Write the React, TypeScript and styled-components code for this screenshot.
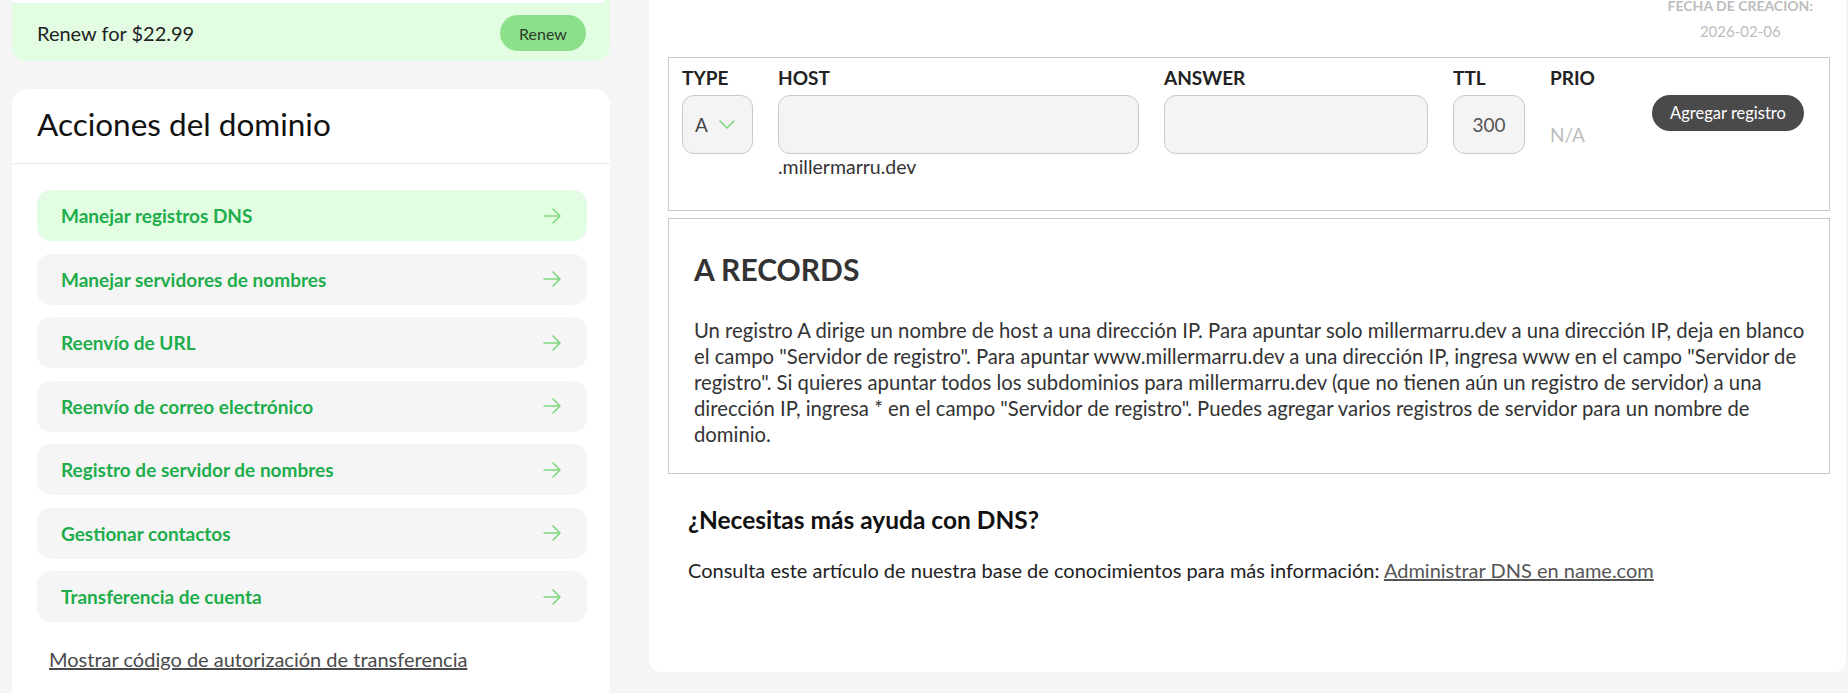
import styled, { createGlobalStyle } from "styled-components";

const GlobalStyle = createGlobalStyle`
  html, body {
    margin: 0;
    padding: 0;
    background: #f5f5f5;
    overflow: hidden;
  }
  body {
    font-family: Lato, "Liberation Sans", sans-serif;
    color: #222;
  }
`;

const actions = [
  "Manejar registros DNS",
  "Manejar servidores de nombres",
  "Reenvío de URL",
  "Reenvío de correo electrónico",
  "Registro de servidor de nombres",
  "Gestionar contactos",
  "Transferencia de cuenta",
];

const Arrow = () => (
  <svg width="18" height="16" viewBox="0 0 18 16" fill="none">
    <path
      d="M1 8H17M10 1L17 8L10 15"
      stroke="#7fd97f"
      strokeWidth="1.6"
      strokeLinecap="round"
      strokeLinejoin="round"
    />
  </svg>
);

const Chevron = () => (
  <svg width="16" height="9" viewBox="0 0 16 9" fill="none">
    <path
      d="M1 1L8 8L15 1"
      stroke="#7fd97f"
      strokeWidth="1.6"
      strokeLinecap="round"
      strokeLinejoin="round"
    />
  </svg>
);

const App = () => {
  return (
    <>
      <GlobalStyle />
      <Page>
        <LeftColumn>
          <RenewCard>
            <RenewTop />
            <RenewRow>
              <RenewText>Renew for $22.99</RenewText>
              <RenewButton>Renew</RenewButton>
            </RenewRow>
          </RenewCard>

          <ActionsCard>
            <ActionsHeader>Acciones del dominio</ActionsHeader>
            <ActionsList>
              {actions.map((label, i) => (
                <ActionItem key={label} $active={i === 0}>
                  <span>{label}</span>
                  <Arrow />
                </ActionItem>
              ))}
            </ActionsList>
            <AuthLink href="#">
              Mostrar código de autorización de transferencia
            </AuthLink>
          </ActionsCard>
        </LeftColumn>

        <RightPanel>
          <Meta>
            <MetaLabel>FECHA DE CREACION:</MetaLabel>
            <MetaValue>2026-02-06</MetaValue>
          </Meta>

          <FormBox>
            <Field $width={71}>
              <Label>TYPE</Label>
              <Select>
                <span>A</span>
                <Chevron />
              </Select>
            </Field>
            <Field $width={361}>
              <Label>HOST</Label>
              <Input />
              <Suffix>.millermarru.dev</Suffix>
            </Field>
            <Field $width={264}>
              <Label>ANSWER</Label>
              <Input />
            </Field>
            <Field $width={72}>
              <Label>TTL</Label>
              <Input defaultValue="300" $center />
            </Field>
            <Field $width={77}>
              <Label>PRIO</Label>
              <Muted>N/A</Muted>
            </Field>
            <AddButton>Agregar registro</AddButton>
          </FormBox>

          <InfoBox>
            <InfoTitle>A RECORDS</InfoTitle>
            <InfoText>
              Un registro A dirige un nombre de host a una dirección IP. Para
              apuntar solo millermarru.dev a una dirección IP, deja en blanco el
              campo "Servidor de registro". Para apuntar www.millermarru.dev a
              una dirección IP, ingresa www en el campo "Servidor de registro".
              Si quieres apuntar todos los subdominios para millermarru.dev (que
              no tienen aún un registro de servidor) a una dirección IP, ingresa
              * en el campo "Servidor de registro". Puedes agregar varios
              registros de servidor para un nombre de dominio.
            </InfoText>
          </InfoBox>

          <Help>
            <HelpTitle>¿Necesitas más ayuda con DNS?</HelpTitle>
            <HelpText>
              Consulta este artículo de nuestra base de conocimientos para más
              información: <HelpLink href="#">Administrar DNS en name.com</HelpLink>
            </HelpText>
          </Help>
        </RightPanel>
      </Page>
    </>
  );
};

export default App;

const Page = styled.div`
  display: flex;
  align-items: flex-start;
  gap: 39px;
  height: 693px;
  padding: 0 2px 0 12px;
  box-sizing: border-box;
  overflow: hidden;
`;

const LeftColumn = styled.div`
  width: 598px;
  flex-shrink: 0;
  display: flex;
  flex-direction: column;
  gap: 28px;
`;

const RenewCard = styled.div`
  background: #e3fde3;
  border-radius: 0 0 14px 14px;
`;

const RenewTop = styled.div`
  height: 3px;
  margin: 0 6px 0 0;
  background: #fff;
  border-radius: 0 0 10px 10px;
`;

const RenewRow = styled.div`
  display: flex;
  align-items: center;
  justify-content: space-between;
  padding: 12px 24px 10px 25px;
`;

const RenewText = styled.span`
  font-size: 20px;
  color: #222;
`;

const RenewButton = styled.button`
  height: 36px;
  width: 86px;
  border: none;
  border-radius: 18px;
  background: #8de08a;
  color: #2b3a2b;
  font-family: inherit;
  font-size: 16px;
  cursor: pointer;
`;

const ActionsCard = styled.div`
  background: #fff;
  border-radius: 16px 16px 0 0;
  height: 640px;
`;

const ActionsHeader = styled.h2`
  margin: 0;
  height: 75px;
  box-sizing: border-box;
  display: flex;
  align-items: center;
  padding: 0 25px 4px;
  border-bottom: 1px solid #ebebeb;
  font-size: 31.5px;
  font-weight: 400;
  color: #111;
`;

const ActionsList = styled.div`
  display: flex;
  flex-direction: column;
  gap: 12.5px;
  padding: 26px 23px 0 25px;
`;

const ActionItem = styled.div<{ $active: boolean }>`
  height: 51px;
  display: flex;
  align-items: center;
  justify-content: space-between;
  padding: 0 26px 0 24px;
  border-radius: 14px;
  background: ${(props) => (props.$active ? "#e2fde2" : "#f5f5f5")};
  color: #20ad4b;
  font-size: 19px;
  font-weight: 700;
  cursor: pointer;
`;

const AuthLink = styled.a`
  display: inline-block;
  margin: 25px 0 0 37px;
  font-size: 20px;
  line-height: 24px;
  color: #4a4a4a;
  text-decoration: underline;
`;

const RightPanel = styled.div`
  flex: 1;
  height: 672px;
  box-sizing: border-box;
  background: #fff;
  border-radius: 0 0 12px 12px;
  padding: 0 16px 0 19px;
  display: flex;
  flex-direction: column;
`;

const Meta = styled.div`
  align-self: flex-end;
  margin: -4px 17px 16px 0;
  display: flex;
  flex-direction: column;
  align-items: center;
`;

const MetaLabel = styled.div`
  font-size: 14px;
  line-height: 20px;
  font-weight: 700;
  color: #bdbdbd;
`;

const MetaValue = styled.div`
  margin-top: 5px;
  font-size: 15px;
  line-height: 20px;
  color: #bdbdbd;
`;

const FormBox = styled.div`
  height: 154px;
  box-sizing: border-box;
  border: 1px solid #c9c9c9;
  padding: 10px 0 0 13px;
  display: flex;
  align-items: flex-start;
  gap: 25px;
`;

const Field = styled.div<{ $width: number }>`
  width: ${(props) => props.$width}px;
  flex-shrink: 0;
  display: flex;
  flex-direction: column;
`;

const Label = styled.div`
  font-size: 19px;
  line-height: 20px;
  font-weight: 700;
  color: #222;
  margin-bottom: 7px;
`;

const Select = styled.div`
  height: 59px;
  box-sizing: border-box;
  border: 1px solid #c9c9c9;
  border-radius: 12px;
  background: #f4f4f4;
  display: flex;
  align-items: center;
  gap: 11px;
  padding-left: 12px;
  font-size: 19px;
  color: #444;
`;

const Input = styled.input<{ $center?: boolean }>`
  height: 59px;
  width: 100%;
  box-sizing: border-box;
  border: 1px solid #c9c9c9;
  border-radius: 12px;
  background: #f4f4f4;
  font-family: inherit;
  font-size: 19px;
  color: #555;
  text-align: ${(props) => (props.$center ? "center" : "left")};
  outline: none;
`;

const Suffix = styled.div`
  margin-top: 2px;
  font-size: 19.5px;
  line-height: 22px;
  color: #333;
`;

const Muted = styled.div`
  padding-top: 28px;
  font-size: 19px;
  line-height: 24px;
  color: #bdbdbd;
`;

const AddButton = styled.button`
  margin-top: 27px;
  height: 36px;
  width: 152px;
  border: none;
  border-radius: 18px;
  background: #4a4a4a;
  color: #fff;
  font-family: inherit;
  font-size: 16.5px;
  cursor: pointer;
`;

const InfoBox = styled.div`
  margin-top: 7px;
  height: 256px;
  box-sizing: border-box;
  border: 1px solid #c9c9c9;
  padding: 32px 17px 0 25px;
`;

const InfoTitle = styled.h3`
  margin: 0;
  font-size: 30px;
  line-height: 36px;
  font-weight: 700;
  color: #333;
`;

const InfoText = styled.p`
  margin: 30px 0 0;
  font-size: 20.3px;
  line-height: 26px;
  color: #333;
`;

const Help = styled.div`
  padding: 31px 20px 0;
`;

const HelpTitle = styled.h4`
  margin: 0;
  font-size: 24.5px;
  line-height: 30px;
  font-weight: 700;
  color: #111;
`;

const HelpText = styled.p`
  margin: 23px 0 0;
  font-size: 20px;
  line-height: 24px;
  color: #222;
`;

const HelpLink = styled.a`
  color: #555;
  text-decoration: underline;
`;
